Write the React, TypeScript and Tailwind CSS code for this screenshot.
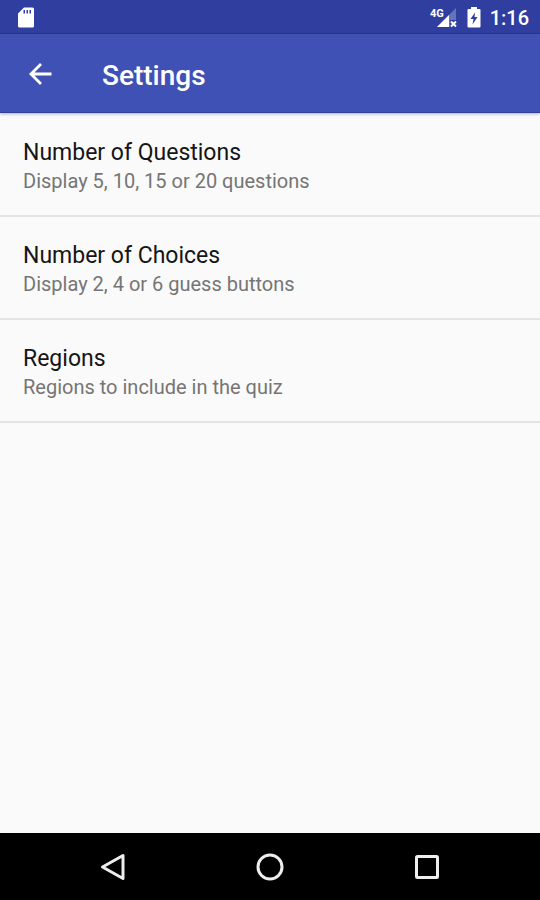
const preferences = [
  { title: 'Number of Questions', summary: 'Display 5, 10, 15 or 20 questions' },
  { title: 'Number of Choices', summary: 'Display 2, 4 or 6 guess buttons' },
  { title: 'Regions', summary: 'Regions to include in the quiz' },
];

function StatusBar() {
  return (
    <div className="flex h-[34px] items-center justify-between border-b border-[#2a3990] bg-[#303f9f] pr-[11px] pl-4 text-white">
      <svg width="20" height="24" viewBox="0 0 20 24" aria-hidden="true">
        <path
          fill="currentColor"
          fillRule="evenodd"
          d="M8 2.500h8.500a1.500 1.500 0 0 1 1.500 1.500v17a1.500 1.500 0 0 1-1.500 1.500H3.500A1.500 1.500 0 0 1 2 21V8.500zM7.500 5v3.500H9V5zM10.500 5v3.500H12V5zM13.500 5v3.500H15V5z"
        />
      </svg>
      <div className="flex items-center pt-0.5">
        <svg width="28" height="24" viewBox="0 0 28 24" aria-hidden="true">
          <path fill="#6672b9" d="M26 2v12h-6v7H7z" />
          <path fill="currentColor" d="M19 9v12H7z" />
          <path stroke="currentColor" strokeWidth="2" d="M21 15.500l5 5M26 15.500l-5 5" />
          <path fill="#303f9f" d="M0 0h14v12H0z" />
          <text x="0" y="11" className="fill-white font-['Roboto',sans-serif] text-[11px] font-bold">4G</text>
        </svg>
        <svg className="ml-2" width="16" height="24" viewBox="0 0 16 24" aria-hidden="true">
          <path
            fill="currentColor"
            fillRule="evenodd"
            d="M5 1h6v2h2.500a1 1 0 0 1 1 1v16.500a1 1 0 0 1-1 1h-11a1 1 0 0 1-1-1V4a1 1 0 0 1 1-1H5zM9 6.500L4.500 13h3L6.500 18.500l5-7.500H8.500z"
          />
        </svg>
        <span className="ml-2 text-xl leading-6 font-medium">1:16</span>
      </div>
    </div>
  );
}

function Toolbar() {
  return (
    <header className="relative flex h-[79px] items-center border-b border-[#2f3f9f] bg-[#3f51b5] px-6 pt-px text-white shadow-[0_1px_3px_rgba(0,0,0,0.3)]">
      <button type="button" aria-label="Navigate up" className="flex size-8 items-center justify-center">
        <svg width="32" height="32" viewBox="0 0 32 32" fill="none" stroke="currentColor" strokeWidth="2.800" aria-hidden="true">
          <path d="M27.500 16H7M17 6L7 16l10 10" />
        </svg>
      </button>
      <h1 className="ml-[46px] pt-1 text-[28px] leading-8 font-medium">Settings</h1>
    </header>
  );
}

function NavigationBar() {
  const button = 'flex h-12 w-16 items-center justify-center';
  return (
    <nav className="flex h-[67px] items-center justify-center gap-[93px] bg-black text-[#eeeeee]">
      <button type="button" aria-label="Back" className={button}>
        <svg width="28" height="28" viewBox="0 0 28 28" fill="none" stroke="currentColor" strokeWidth="3" strokeLinejoin="round" aria-hidden="true">
          <path d="M24 2.500v23L3.500 14z" />
        </svg>
      </button>
      <button type="button" aria-label="Home" className={button}>
        <svg width="28" height="28" viewBox="0 0 28 28" fill="none" stroke="currentColor" strokeWidth="3" aria-hidden="true">
          <circle cx="14" cy="14" r="12" />
        </svg>
      </button>
      <button type="button" aria-label="Overview" className={button}>
        <svg width="28" height="28" viewBox="0 0 28 28" fill="none" stroke="currentColor" strokeWidth="3" strokeLinejoin="round" aria-hidden="true">
          <rect x="3.500" y="3.500" width="21" height="21" rx="1" />
        </svg>
      </button>
    </nav>
  );
}

export default function App() {
  return (
    <div className="flex min-h-screen flex-col bg-[#fafafa] font-['Roboto',sans-serif]">
      <StatusBar />
      <Toolbar />
      <main className="flex-1 pt-px">
        <ul>
          {preferences.map((item) => (
            <li key={item.title} className="border-b-2 border-[#e4e4e4]">
              <button type="button" className="block w-full px-[23px] pt-[25px] pb-[19px] text-left">
                <span className="block text-[23px] leading-7 text-[#151515]">{item.title}</span>
                <span className="block text-xl leading-[29px] text-[#757575]">{item.summary}</span>
              </button>
            </li>
          ))}
        </ul>
      </main>
      <NavigationBar />
    </div>
  );
}
